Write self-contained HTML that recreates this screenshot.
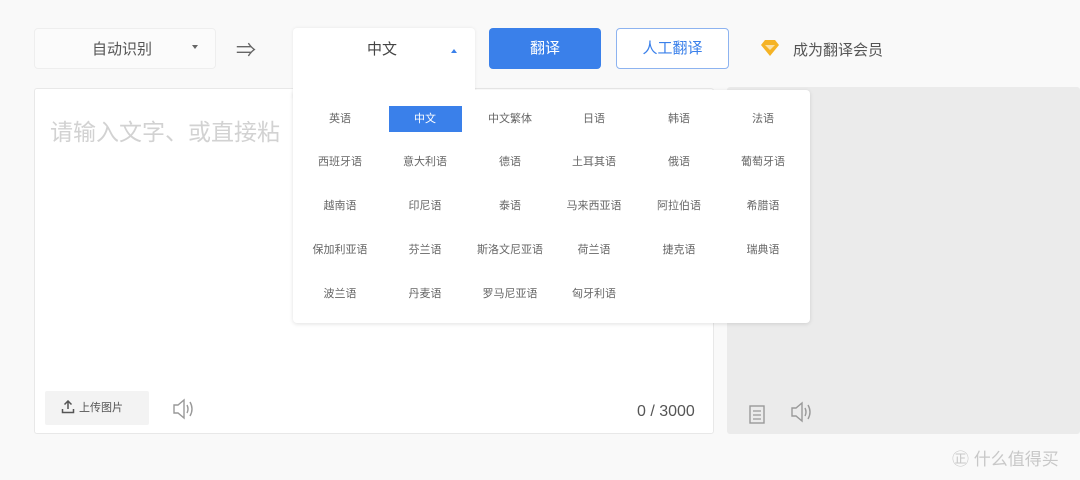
<!DOCTYPE html>
<html><head><meta charset="utf-8"><style>
*{box-sizing:border-box;margin:0;padding:0}
body{width:1080px;height:480px;background:#f9f9f9;font-family:"Liberation Sans","Noto Sans CJK SC",sans-serif;position:relative;overflow:hidden;color:#333}
.abs{position:absolute}
.sel{background:#fbfbfb;border:1px solid #eee;border-radius:4px}
.grid div{position:absolute;width:80px;margin-left:-40px;text-align:center;font-size:11px;color:#666;line-height:26px}
</style></head><body>
<div class="abs sel" style="left:34px;top:28px;width:182px;height:41px"></div>
<div class="abs" style="left:92px;top:38px;font-size:15px;color:#555">自动识别</div>
<div class="abs" style="left:192px;top:45px;border:3px solid transparent;border-top:4px solid #666"></div>
<div class="abs" style="left:236px;top:34px;font-size:20px;color:#666">⇒</div>

<div class="abs" style="left:34px;top:88px;width:680px;height:346px;background:#fff;border:1px solid #e8e8e8;border-radius:3px"></div>
<div class="abs" style="left:50px;top:113px;font-size:23px;color:#d2d2d2">请输入文字、或直接粘</div>
<div class="abs" style="left:45px;top:391px;width:104px;height:34px;background:#f3f3f3;border-radius:2px;font-size:11px;color:#555;line-height:34px;padding-left:34px">上传图片</div>
<svg class="abs" style="left:61px;top:400px" width="14" height="14"><path d="M7 1v8M3.5 4.5L7 1l3.5 3.5M1.5 9v3.5h11V9" fill="none" stroke="#555" stroke-width="1.5"/></svg>
<svg class="abs" style="left:171px;top:398px" width="26" height="22" viewBox="0 0 26 22"><path d="M3 7h4l6-5v18l-6-5H3z" fill="none" stroke="#999" stroke-width="1.4"/><path d="M16 7q2 4 0 8M19 4q4 7 0 14" fill="none" stroke="#999" stroke-width="1.4"/></svg>
<div class="abs" style="left:637px;top:403px;font-size:16px;color:#555">0 / 3000</div>

<div class="abs" style="left:727px;top:87px;width:353px;height:347px;background:#ebebeb;border-radius:3px"></div>
<svg class="abs" style="left:748px;top:403px" width="20" height="22"><rect x="2" y="3" width="14" height="17" fill="none" stroke="#999" stroke-width="1.4"/><path d="M5 8h8M5 12h8M5 16h8" stroke="#999" stroke-width="1.2"/></svg>
<svg class="abs" style="left:789px;top:401px" width="26" height="22" viewBox="0 0 26 22"><path d="M3 7h4l6-5v18l-6-5H3z" fill="none" stroke="#999" stroke-width="1.4"/><path d="M16 7q2 4 0 8M19 4q4 7 0 14" fill="none" stroke="#999" stroke-width="1.4"/></svg>
<div class="abs" style="left:952px;top:445px;font-size:17px;color:#c8c8c8">㊣ 什么值得买</div>

<div class="abs" style="left:489px;top:28px;width:112px;height:41px;background:#3a80ea;border-radius:4px;color:#fff;font-size:15px;text-align:center;line-height:41px">翻译</div>
<div class="abs" style="left:616px;top:28px;width:113px;height:41px;background:#fff;border:1px solid #8db3f0;border-radius:4px;color:#3a80ea;font-size:15px;text-align:center;line-height:39px">人工翻译</div>
<svg class="abs" style="left:758px;top:38px" width="24" height="20"><path d="M3 7l4-5h10l4 5-9 11z" fill="#f5b325"/><path d="M7 7h10l-5 5z" fill="#fff" opacity=".6"/></svg>
<div class="abs" style="left:793px;top:39px;font-size:15px;color:#555">成为翻译会员</div>

<div class="abs" style="left:293px;top:28px;width:182px;height:70px;background:#fff;border-radius:4px 4px 0 0;box-shadow:0 0 3px rgba(0,0,0,.08)"></div>
<div class="abs" style="left:293px;top:90px;width:517px;height:233px;background:#fff;border-radius:4px;box-shadow:0 1px 4px rgba(0,0,0,.12)"></div>
<div class="abs" style="left:293px;top:80px;width:182px;height:20px;background:#fff"></div>
<div class="abs" style="left:367px;top:38px;font-size:15px;color:#444">中文</div>
<div class="abs" style="left:451px;top:46px;border:3px solid transparent;border-bottom:4px solid #3a80ea"></div>
<div class="abs" style="left:389px;top:106px;width:73px;height:26px;background:#3a80ea"></div>
<div class="grid">
<div style="left:340px;top:106px">英语</div><div style="left:425px;top:106px;color:#fff">中文</div><div style="left:510px;top:106px">中文繁体</div><div style="left:594px;top:106px">日语</div><div style="left:679px;top:106px">韩语</div><div style="left:763px;top:106px">法语</div>
<div style="left:340px;top:149px">西班牙语</div><div style="left:425px;top:149px">意大利语</div><div style="left:510px;top:149px">德语</div><div style="left:594px;top:149px">土耳其语</div><div style="left:679px;top:149px">俄语</div><div style="left:763px;top:149px">葡萄牙语</div>
<div style="left:340px;top:193px">越南语</div><div style="left:425px;top:193px">印尼语</div><div style="left:510px;top:193px">泰语</div><div style="left:594px;top:193px">马来西亚语</div><div style="left:679px;top:193px">阿拉伯语</div><div style="left:763px;top:193px">希腊语</div>
<div style="left:340px;top:237px">保加利亚语</div><div style="left:425px;top:237px">芬兰语</div><div style="left:510px;top:237px">斯洛文尼亚语</div><div style="left:594px;top:237px">荷兰语</div><div style="left:679px;top:237px">捷克语</div><div style="left:763px;top:237px">瑞典语</div>
<div style="left:340px;top:281px">波兰语</div><div style="left:425px;top:281px">丹麦语</div><div style="left:510px;top:281px">罗马尼亚语</div><div style="left:594px;top:281px">匈牙利语</div>
</div>
</body></html>
